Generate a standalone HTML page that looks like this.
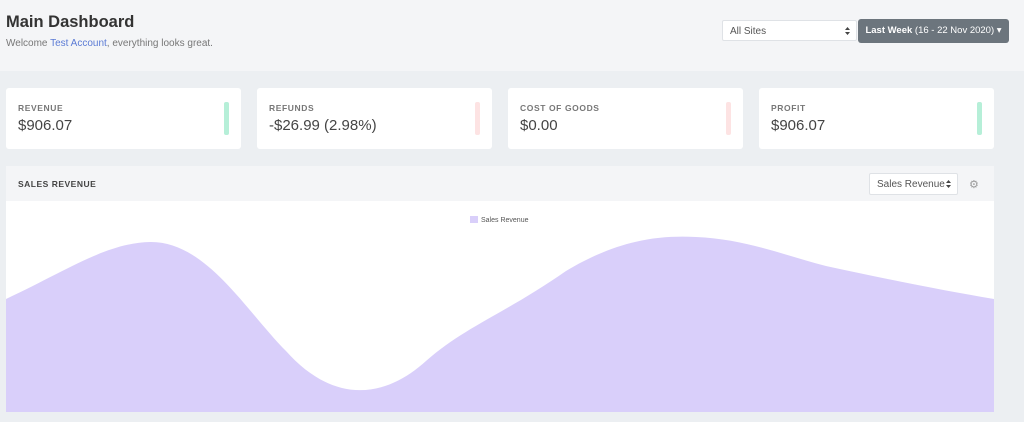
<!DOCTYPE html>
<html><head><style>
body{margin:0;width:1024px;height:422px;background:#eceff2;font-family:"Liberation Sans",sans-serif;overflow:hidden;position:relative}
.top{position:absolute;left:0;top:0;width:1024px;height:71px;background:#f4f5f7}
h1{position:absolute;left:6px;top:13px;margin:0;font-size:16.5px;color:#333;font-weight:bold}
.sub{position:absolute;left:6px;top:38px;font-size:10px;color:#777}
.sub b{color:#5b7bd5;font-weight:normal}
.sel{position:absolute;left:722px;top:20px;width:135px;height:21px;background:#fff;border:1px solid #dfe2e6;border-radius:2px;box-sizing:border-box;font-size:10px;color:#555;padding:5px 7px}
.arr{position:absolute;right:6px;top:6px;width:5px;height:8px}
.btn{position:absolute;left:858px;top:19px;width:151px;height:24px;background:#6c757d;border-radius:3px;color:#fff;font-size:9.5px;line-height:24px;text-align:center;white-space:nowrap}
.card{position:absolute;top:88px;width:235px;height:61px;background:#fff;border-radius:3px}
.card .l{position:absolute;left:12px;top:15px;font-size:8.5px;font-weight:bold;color:#777;letter-spacing:.6px}
.card .v{position:absolute;left:12px;top:29px;font-size:15px;color:#444}
.card .bar{position:absolute;right:12px;top:14px;width:5px;height:33px;border-radius:2px}
.g{background:#b6efd8}.r{background:#fde3e3}
.panel{position:absolute;left:6px;top:166px;width:988px;height:35px;background:#f4f5f7}
.panel .t{position:absolute;left:12px;top:13px;font-size:8.5px;font-weight:bold;color:#444;letter-spacing:.5px}
.sr{position:absolute;left:869px;top:173px;width:89px;height:22px;background:#fff;border:1px solid #dfe2e6;border-radius:2px;box-sizing:border-box;font-size:10px;color:#555;padding:5px 7px;white-space:nowrap}
</style></head><body>
<div class="top"></div>
<h1>Main Dashboard</h1>
<div class="sub">Welcome <b>Test Account</b>, everything looks great.</div>
<div class="sel">All Sites<svg class="arr" viewBox="0 0 5 8"><path d="M0 3L2.5 0L5 3ZM0 5L2.5 8L5 5Z" fill="#444"/></svg></div>
<div class="btn"><b>Last Week</b> (16 - 22 Nov 2020) &#9662;</div>
<div class="card" style="left:6px"><div class="l">REVENUE</div><div class="v">$906.07</div><div class="bar g"></div></div>
<div class="card" style="left:257px"><div class="l">REFUNDS</div><div class="v">-$26.99 (2.98%)</div><div class="bar r"></div></div>
<div class="card" style="left:508px"><div class="l">COST OF GOODS</div><div class="v">$0.00</div><div class="bar r"></div></div>
<div class="card" style="left:759px"><div class="l">PROFIT</div><div class="v">$906.07</div><div class="bar g"></div></div>
<div class="panel"><div class="t">SALES REVENUE</div></div>
<div class="sr">Sales Revenue<svg class="arr" viewBox="0 0 5 8"><path d="M0 3L2.5 0L5 3ZM0 5L2.5 8L5 5Z" fill="#444"/></svg></div>
<div style="position:absolute;left:969px;top:178px;font-size:11px;color:#999">&#9881;</div>
<svg style="position:absolute;left:6px;top:201px" width="988" height="211">
<rect width="988" height="211" fill="#fff"/>
<path d="M0 98 C60 70 100 42 144 41 C200 40 240 110 280 150 C320 195 370 205 420 160 C460 125 500 112 560 70 C610 40 650 34 690 36 C740 38 780 55 820 65 C880 78 940 90 988 98 L988 211 L0 211Z" fill="#d9cffa"/>
<rect x="464" y="15" width="8" height="7" fill="#d9cffa"/>
<text x="475" y="21" font-size="7" fill="#555" font-family="Liberation Sans">Sales Revenue</text>
</svg>
</body></html>
